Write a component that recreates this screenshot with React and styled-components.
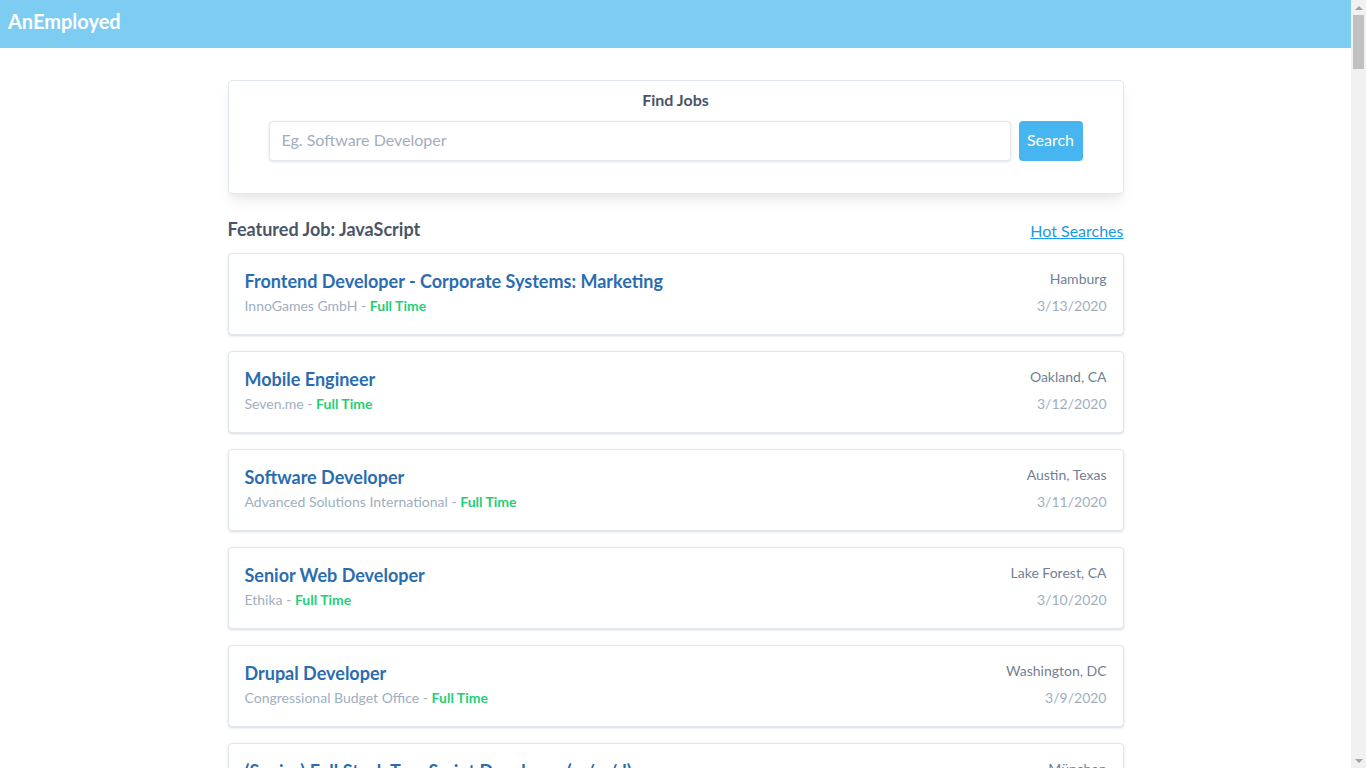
import React from "react";
import styled, { createGlobalStyle } from "styled-components";

const GlobalStyle = createGlobalStyle`
  html, body { margin: 0; padding: 0; background: #fff; height: 100%; overflow: hidden; }
  body { font-family: Lato, "Open Sans", sans-serif; color: #4a5568; }
  #root { height: 100%; }
  * { box-sizing: border-box; }
`;

const Shell = styled.div`
  display: flex;
  height: 100vh;
  overflow: hidden;
`;

const Page = styled.div`
  flex: 1;
  min-width: 0;
  overflow: hidden;
`;

const ScrollTrack = styled.aside`
  width: 15px;
  flex-shrink: 0;
  background: #f1f1f1;
  display: flex;
  flex-direction: column;
  align-items: center;
`;

const ScrollArrow = styled.div`
  width: 15px;
  height: 15px;
  display: flex;
  align-items: center;
  justify-content: center;
  &::before {
    content: "";
    width: 0;
    height: 0;
    border-left: 4px solid transparent;
    border-right: 4px solid transparent;
    ${(p) =>
      p.$down
        ? "border-top: 4px solid #a3a3a3;"
        : "border-bottom: 4px solid #a3a3a3;"}
  }
`;

const ScrollThumb = styled.div`
  width: 11px;
  height: 54px;
  background: #c1c1c1;
`;

const ScrollSpacer = styled.div`
  flex: 1;
`;

const Header = styled.header`
  height: 48px;
  background: #7dcdf3;
  display: flex;
  align-items: center;
  padding: 0 8px;
`;

const Logo = styled.div`
  color: #fff;
  font-weight: 700;
  font-size: 20px;
  line-height: 24px;
  margin-top: -6px;
`;

const Main = styled.main`
  max-width: 896px;
  margin: 0 auto;
  padding: 32px 0 40px;
`;

const SearchCard = styled.section`
  background: #fff;
  border: 1px solid #e2e8f0;
  border-radius: 4px;
  box-shadow: 0 10px 15px -3px rgba(0, 0, 0, 0.08), 0 4px 6px -2px rgba(0, 0, 0, 0.04);
  padding: 9px 40px 32px;
`;

const SearchTitle = styled.h2`
  margin: 0 0 11px;
  text-align: center;
  font-size: 16px;
  line-height: 20px;
  font-weight: 700;
  color: #4a5568;
`;

const SearchRow = styled.form`
  display: flex;
  gap: 8px;
`;

const SearchInput = styled.input`
  flex: 1;
  height: 40px;
  border: 1px solid #e2e8f0;
  border-radius: 4px;
  box-shadow: 0 1px 3px rgba(0, 0, 0, 0.12);
  padding: 0 12px 3px;
  font-family: inherit;
  font-size: 16px;
  color: #4a5568;
  outline: none;
  &::placeholder { color: #a0aec0; }
`;

const SearchButton = styled.button`
  height: 40px;
  width: 64px;
  border: none;
  border-radius: 4px;
  background: #47b5f0;
  color: #fff;
  font-family: inherit;
  font-size: 16px;
  padding: 0 0 3px;
  cursor: pointer;
`;

const SectionHead = styled.div`
  display: flex;
  justify-content: space-between;
  align-items: flex-end;
  margin: 23px 0 12px;
`;

const SectionTitle = styled.h3`
  margin: 0;
  font-size: 18px;
  line-height: 24px;
  font-weight: 700;
  color: #4a5568;
`;

const HotLink = styled.a`
  font-size: 16px;
  line-height: 20px;
  color: #1a9be2;
  text-decoration: underline;
  cursor: pointer;
`;

const JobList = styled.div`
  display: flex;
  flex-direction: column;
  gap: 16px;
`;

const JobCard = styled.article`
  display: flex;
  justify-content: space-between;
  border: 1px solid #e2e8f0;
  border-radius: 4px;
  box-shadow: 0 1px 3px rgba(0, 0, 0, 0.1), 0 1px 2px rgba(0, 0, 0, 0.06);
  padding: 15px 16px 18px;
  background: #fff;
`;

const JobMain = styled.div`
  display: flex;
  flex-direction: column;
  gap: 3px;
`;

const JobTitle = styled.a`
  font-size: 18px;
  line-height: 24px;
  font-weight: 700;
  color: #2b6cb0;
  text-decoration: none;
`;

const JobMeta = styled.div`
  font-size: 14px;
  line-height: 20px;
  color: #a0aec0;
`;

const JobType = styled.span`
  color: #1fcf77;
  font-weight: 700;
`;

const JobSide = styled.div`
  display: flex;
  flex-direction: column;
  align-items: flex-end;
  justify-content: space-between;
`;

const Location = styled.div`
  font-size: 14px;
  line-height: 20px;
  color: #718096;
`;

const DateText = styled.div`
  font-size: 14px;
  line-height: 20px;
  color: #a0aec0;
`;

const jobs = [
  { title: "Frontend Developer - Corporate Systems: Marketing", company: "InnoGames GmbH", location: "Hamburg", date: "3/13/2020" },
  { title: "Mobile Engineer", company: "Seven.me", location: "Oakland, CA", date: "3/12/2020" },
  { title: "Software Developer", company: "Advanced Solutions International", location: "Austin, Texas", date: "3/11/2020" },
  { title: "Senior Web Developer", company: "Ethika", location: "Lake Forest, CA", date: "3/10/2020" },
  { title: "Drupal Developer", company: "Congressional Budget Office", location: "Washington, DC", date: "3/9/2020" },
  { title: "(Senior) Full Stack TypeScript Developer (m/w/d)", company: "Company GmbH", location: "München", date: "3/8/2020" },
];

export default function App() {
  return (
    <Shell>
      <GlobalStyle />
      <Page>
        <Header>
          <Logo>AnEmployed</Logo>
        </Header>
        <Main>
          <SearchCard>
            <SearchTitle>Find Jobs</SearchTitle>
            <SearchRow onSubmit={(e) => e.preventDefault()}>
              <SearchInput placeholder="Eg. Software Developer" />
              <SearchButton type="submit">Search</SearchButton>
            </SearchRow>
          </SearchCard>
          <SectionHead>
            <SectionTitle>Featured Job: JavaScript</SectionTitle>
            <HotLink>Hot Searches</HotLink>
          </SectionHead>
          <JobList>
            {jobs.map((job) => (
              <JobCard key={job.title}>
                <JobMain>
                  <JobTitle>{job.title}</JobTitle>
                  <JobMeta>
                    {job.company} - <JobType>Full Time</JobType>
                  </JobMeta>
                </JobMain>
                <JobSide>
                  <Location>{job.location}</Location>
                  <DateText>{job.date}</DateText>
                </JobSide>
              </JobCard>
            ))}
          </JobList>
        </Main>
      </Page>
      <ScrollTrack aria-hidden="true">
        <ScrollArrow />
        <ScrollThumb />
        <ScrollSpacer />
        <ScrollArrow $down />
      </ScrollTrack>
    </Shell>
  );
}
